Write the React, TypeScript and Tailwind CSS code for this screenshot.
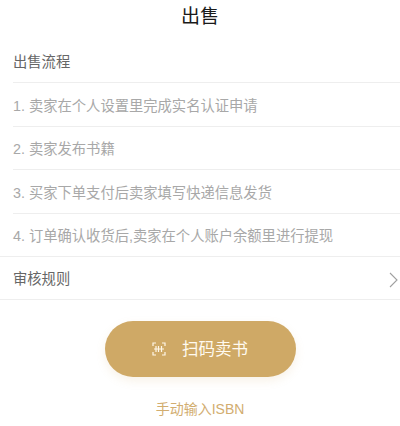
const font = { fontFamily: '"Liberation Sans", "Noto Sans CJK SC", sans-serif' };

function Row({ children, dark, last }: { children: React.ReactNode; dark?: boolean; last?: boolean }) {
  return (
    <div className={`${last ? "h-[42.4px]" : "h-[43.4px] border-b border-[#eeeeee]"} pt-[4px] flex items-center text-[14.3px] ${dark ? "text-[#666666]" : "text-[#a8a8a8]"}`}>
      {children}
    </div>
  );
}

export default function App() {
  return (
    <div style={font} className="w-[400px] h-[426px] bg-white overflow-hidden flex flex-col">
      <div className="h-[40px] pb-[6px] flex items-center justify-center text-[19px] text-[#1a1a1a] shrink-0">出售</div>
      <div className="pl-[13px] border-b border-[#eeeeee]">
        <Row dark>出售流程</Row>
        <Row>1. 卖家在个人设置里完成实名认证申请</Row>
        <Row>2. 卖家发布书籍</Row>
        <Row>3. 买家下单支付后卖家填写快递信息发货</Row>
        <Row last>4. 订单确认收货后,卖家在个人账户余额里进行提现</Row>
      </div>
      <div className="h-[43.4px] pt-[3px] pl-[13px] pr-[2px] flex items-center justify-between border-b border-[#eeeeee] text-[14.3px] text-[#666666]">
        <span>审核规则</span>
        <svg width="9" height="16" viewBox="0 0 9 16" fill="none" stroke="#a0a0a0" strokeWidth="1.1">
          <path d="M1 1l7 7-7 7" />
        </svg>
      </div>
      <div className="flex flex-col items-center pt-[21px]">
        <div className="w-[191px] h-[56px] rounded-full bg-[#cfa966] flex items-center justify-center gap-[16px] text-[#fffaf0] text-[16.5px] shadow-[0_4px_10px_rgba(207,169,102,0.15)]">
          <svg width="14" height="14" viewBox="0 0 14 14" fill="none" stroke="#fff7e8" strokeWidth="1.2">
            <path d="M1 4V1h3M10 1h3v3M13 10v3h-3M4 13H1v-3" />
            <path d="M2 7h10M4 4v6M6.500 4v6M9.500 4v6" />
          </svg>
          <span>扫码卖书</span>
        </div>
        <div className="mt-[22px] text-[14px] text-[#d2ad70]">手动输入ISBN</div>
      </div>
    </div>
  );
}
